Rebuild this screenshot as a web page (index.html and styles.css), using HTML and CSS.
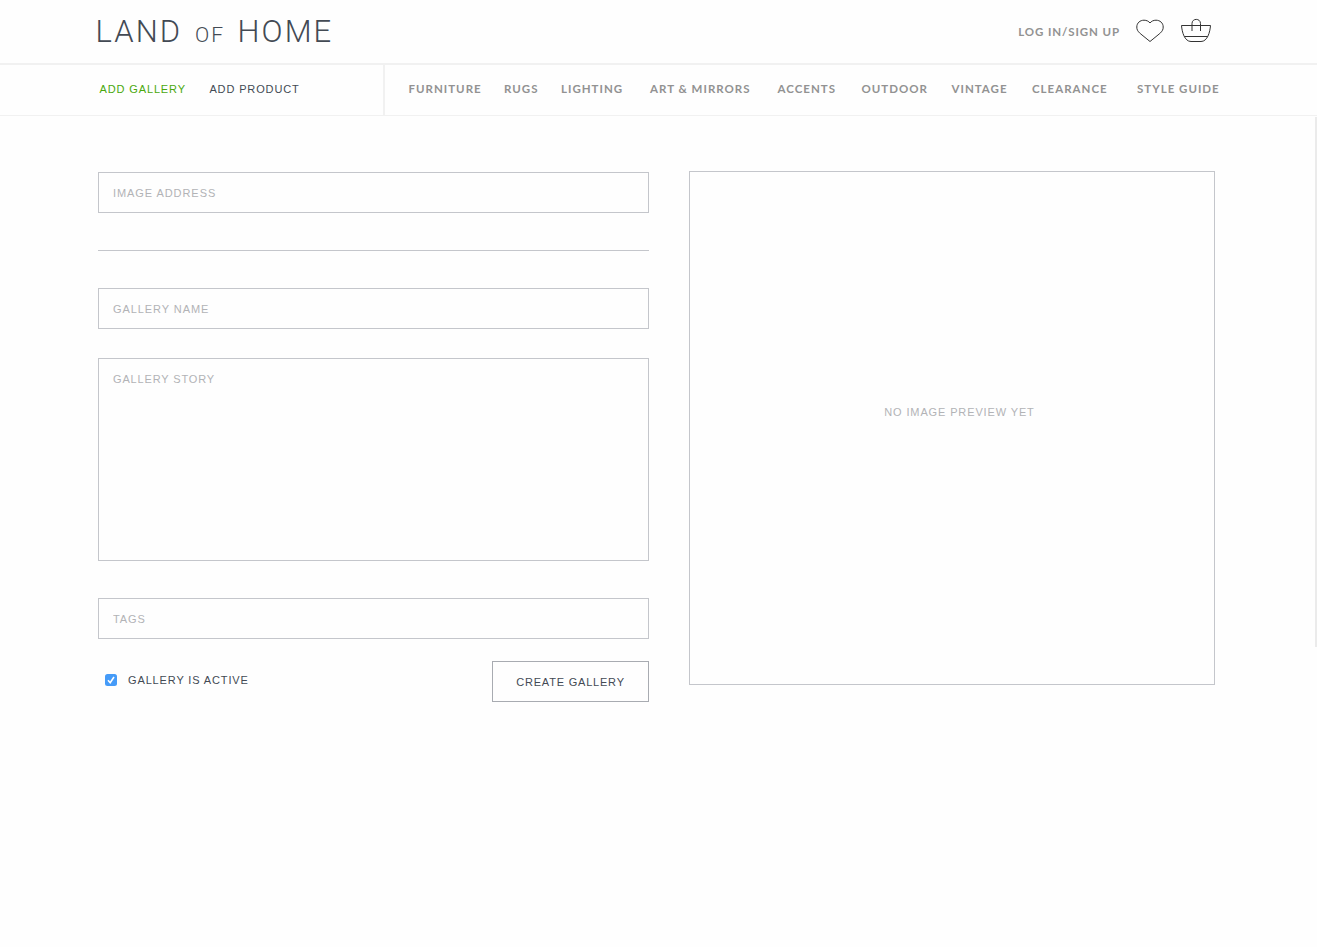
FILE: index.html
```html
<!DOCTYPE html>
<html lang="en">
<head>
<meta charset="utf-8">
<title>Land of Home</title>
<link rel="stylesheet" href="styles.css">
</head>
<body>
<header class="masthead">
  <a class="logo"><span class="land">LAND</span><span class="of">OF</span><span class="home">HOME</span></a>
  <div class="account">
    <a class="login">LOG IN/SIGN UP</a>
    <svg class="heart" width="28" height="24" viewBox="0 0 28 24"><path d="M14 22.500L4.200 14.500C1.500 12 .8 10.500 .8 8C.8 4 4 1.200 8 1.200C10.500 1.200 12.700 2.200 14 4C15.300 2.200 17.500 1.200 20 1.200C24 1.200 27.200 4 27.200 8C27.200 10.500 26.500 12 23.800 14.500Z"/></svg>
    <svg class="basket" width="32" height="24" viewBox="0 0 32 24"><path d="M1.500 7.500H30.500C30 14 27.500 23.500 21 23.500H11C4.500 23.500 2 14 1.500 7.500ZM4.500 18.500H27.500M12 13V5.500C12 0 20.500 0 20.500 5.500V13"/></svg>
  </div>
</header>
<nav class="navbar">
  <div class="admin"><a class="current">ADD GALLERY</a><a>ADD PRODUCT</a></div>
  <div class="shop"><a>FURNITURE</a><a>RUGS</a><a>LIGHTING</a><a>ART &amp; MIRRORS</a><a>ACCENTS</a><a>OUTDOOR</a><a>VINTAGE</a><a>CLEARANCE</a><a>STYLE GUIDE</a></div>
</nav>
<div class="scrollbar"></div>
<main class="content">
  <form class="form">
    <input class="field" placeholder="IMAGE ADDRESS">
    <hr class="rule">
    <input class="field" placeholder="GALLERY NAME">
    <textarea class="field story" placeholder="GALLERY STORY"></textarea>
    <input class="field" placeholder="TAGS">
    <div class="actions">
      <label class="active"><svg width="12" height="12" viewBox="0 0 12 12"><rect width="12" height="12" rx="2.5" fill="#459bf8"/><path d="M3 6.300L5.200 8.700L9 3" fill="none" stroke="#fff" stroke-width="1.600"/></svg><span>GALLERY IS ACTIVE</span></label>
      <button class="create" type="button">CREATE GALLERY</button>
    </div>
  </form>
  <section class="preview"><span>NO IMAGE PREVIEW YET</span></section>
</main>
</body>
</html>
```
FILE: styles.css
```css
* { box-sizing: border-box; }
body { margin: 0; background: #fefefe; color: #434a54; font: 11px/14px "Liberation Sans", Arial, sans-serif; letter-spacing: .87px; }
.masthead { height: 65px; border-bottom: 2px solid #f1f1f1; display: flex; justify-content: space-between; padding: 0 105px 0 95.500px; }
.logo { display: flex; align-items: baseline; font: 300 31px/36px Roboto, sans-serif; letter-spacing: 2.1px; padding-top: 14px; white-space: nowrap; }
.land { width: 99.500px; }
.of { width: 42.500px; font-size: 21px; }
.account { display: flex; align-items: flex-start; }
.login { font: 700 11.5px/14px Lato, sans-serif; letter-spacing: .9px; color: #929292; padding-top: 25px; margin-right: 16px; }
.account svg { fill: none; stroke: #333; stroke-width: 1; margin-top: 19px; }
.account .basket { margin-left: 16px; margin-top: 18px; }
.navbar { height: 51px; display: flex; border-bottom: 1px solid #f1f1f1; white-space: nowrap; }
.admin { width: 385px; border-right: 2px solid #f1f1f1; padding: 17px 0 0 99.500px; display: flex; gap: 23.500px; }
.current { color: #4aa80c; }
.shop { display: grid; grid-template-columns: 95.500px 57px 89px 127.500px 84px 90px 80.500px 105px 90px; padding: 17px 0 0 23.500px; font: 700 11.5px/14px Lato, sans-serif; letter-spacing: 1px; color: #929292; }
.scrollbar { position: absolute; right: 0; top: 117px; width: 2px; height: 530px; background: #ebebeb; }
.content { display: flex; align-items: flex-start; gap: 40px; padding: 55px 0 0 98px; }
.form { width: 551px; padding-top: 1px; display: flex; flex-direction: column; }
.field { display: block; width: 100%; height: 41px; margin: 0; padding: 1px 14px 0; border: 1px solid #c4c6cb; border-radius: 0; background: transparent; outline: 0; font: inherit; letter-spacing: .93px; resize: none; }
.field::placeholder { color: #b2b3b6; opacity: 1; }
.rule { width: 100%; height: 1px; border: 0; margin: 37px 0; background: #c4c6cb; }
.story { height: 203px; margin: 29px 0 37px; padding-top: 13px; letter-spacing: .85px; }
.actions { display: flex; justify-content: space-between; margin-top: 22px; }
.active { display: flex; gap: 11px; padding: 13px 0 0 7px; }
.active span { margin-top: -1px; }
.create { width: 157px; height: 41px; padding: 1px 0 0; border: 1px solid #a8abb1; background: transparent; color: inherit; font: inherit; letter-spacing: .8px; }
.preview { width: 526px; height: 514px; border: 1px solid #c4c6cb; color: #b2b3b6; text-align: center; padding: 233px 0 0 15px; }
```
